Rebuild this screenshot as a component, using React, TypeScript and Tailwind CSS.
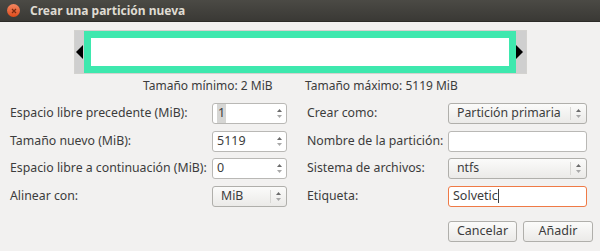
import React from "react";

const font = { fontFamily: '"Noto Sans", "Open Sans", sans-serif' };

const Spin = () => (
  <div className="flex flex-col items-center justify-center gap-[3px] w-[12px]">
    <svg width="5" height="3" viewBox="0 0 5 3"><path d="M0 3 L2.5 0 L5 3 Z" fill="#6b6b6b" /></svg>
    <svg width="5" height="3" viewBox="0 0 5 3"><path d="M0 0 L2.5 3 L5 0 Z" fill="#a8a8a8" /></svg>
  </div>
);

const SpinBox = ({ value, selected }: { value: string; selected?: boolean }) => (
  <div className="flex h-[21px] w-[75px] rounded-[3px] border border-[#b9b8b5] bg-white">
    <div className="flex-1 flex items-center pl-[4px] text-[12.5px] text-[#3c3c3c]">
      {selected ? <span className="bg-[#d6d6d4] px-[1px]">{value}</span> : value}
    </div>
    <div className="w-[13px] flex items-center justify-center">
      <Spin />
    </div>
  </div>
);

const Combo = ({ value, w }: { value: string; w: string }) => (
  <div
    className={`flex h-[21px] ${w} rounded-[3px] border border-[#b0afab] bg-gradient-to-b from-[#fbfbfa] to-[#ebeae8]`}
  >
    <div className="flex-1 flex items-center pl-[8px] text-[12.3px] text-[#3c3c3c]">{value}</div>
    <div className="w-[16px] flex items-center justify-center border-l border-[#d8d7d4] my-[3px]">
      <Spin />
    </div>
  </div>
);

const Entry = ({ children, focus }: { children?: React.ReactNode; focus?: boolean }) => (
  <div
    className={`flex items-center h-[21px] w-[139px] rounded-[3px] bg-white pl-[4px] text-[12.5px] text-[#3c3c3c] border ${
      focus ? "border-[#ef7a46]" : "border-[#b9b8b5]"
    }`}
  >
    {children}
  </div>
);

export default function App() {
  return (
    <div className="w-[600px] h-[251px] bg-[#f2f1f0] flex flex-col overflow-hidden" style={font}>
      <div className="h-[22px] flex items-center bg-gradient-to-b from-[#4b4a45] to-[#3a3935] border-b border-[#2c2b28]">
        <div className="ml-[7px] w-[13px] h-[13px] rounded-full bg-gradient-to-b from-[#f3865f] to-[#df4a16] flex items-center justify-center">
          <svg width="6" height="6" viewBox="0 0 6 6">
            <path d="M1 1 L5 5 M5 1 L1 5" stroke="#7a2a10" strokeWidth="1.2" />
          </svg>
        </div>
        <span className="ml-[10px] text-[12px] font-bold text-[#dfdbd2]">Crear una partición nueva</span>
      </div>

      <div className="mt-[8px] ml-[74px] w-[453px] h-[44px] flex border border-[#d3d2cf] bg-[#f6f6f5]">
        <div className="w-[9px] bg-[#cfcfcf] flex items-center">
          <svg width="8" height="14" viewBox="0 0 8 14"><path d="M8 0 L1 7 L8 14 Z" fill="#000" /></svg>
        </div>
        <div className="flex-1 border-[7px] border-[#3ee8ae] bg-white"></div>
        <div className="w-[10px] bg-[#cfcfcf] flex items-center">
          <svg width="8" height="14" viewBox="0 0 8 14"><path d="M0 0 L7 7 L0 14 Z" fill="#000" /></svg>
        </div>
      </div>

      <div className="flex mt-[4px] text-[12px] text-[#3c3c3c] h-[16px] items-center">
        <span className="ml-[143px] w-[162px]">Tamaño mínimo: 2 MiB</span>
        <span>Tamaño máximo: 5119 MiB</span>
      </div>

      <div className="flex mt-[9px] text-[12.3px] text-[#3c3c3c]">
        <div className="grid grid-cols-[202px_75px] gap-y-[6.5px] pl-[10px] items-center">
          <span>Espacio libre precedente (MiB):</span>
          <SpinBox value="1" selected />
          <span>Tamaño nuevo (MiB):</span>
          <SpinBox value="5119" />
          <span>Espacio libre a continuación (MiB):</span>
          <SpinBox value="0" />
          <span>Alinear con:</span>
          <Combo value="MiB" w="w-[75px]" />
        </div>
        <div className="grid grid-cols-[141px_139px] gap-y-[6.5px] ml-[20px] items-center">
          <span>Crear como:</span>
          <Combo value="Partición primaria" w="w-[139px]" />
          <span>Nombre de la partición:</span>
          <Entry />
          <span>Sistema de archivos:</span>
          <Combo value="ntfs" w="w-[139px]" />
          <span>Etiqueta:</span>
          <Entry focus>
            Solvetic<span className="w-[1px] h-[14px] bg-[#3c3c3c]"></span>
          </Entry>
        </div>
      </div>

      <div className="flex justify-end gap-[6px] mt-[14px] pr-[7px]">
        <button className="h-[21px] w-[69px] rounded-[3px] border border-[#b0afab] bg-gradient-to-b from-[#fbfbfa] to-[#ebeae8] text-[12.5px] text-[#3c3c3c]">
          Cancelar
        </button>
        <button className="h-[21px] w-[70px] rounded-[3px] border border-[#b0afab] bg-gradient-to-b from-[#fbfbfa] to-[#ebeae8] text-[12.5px] text-[#3c3c3c]">
          Añadir
        </button>
      </div>
    </div>
  );
}
